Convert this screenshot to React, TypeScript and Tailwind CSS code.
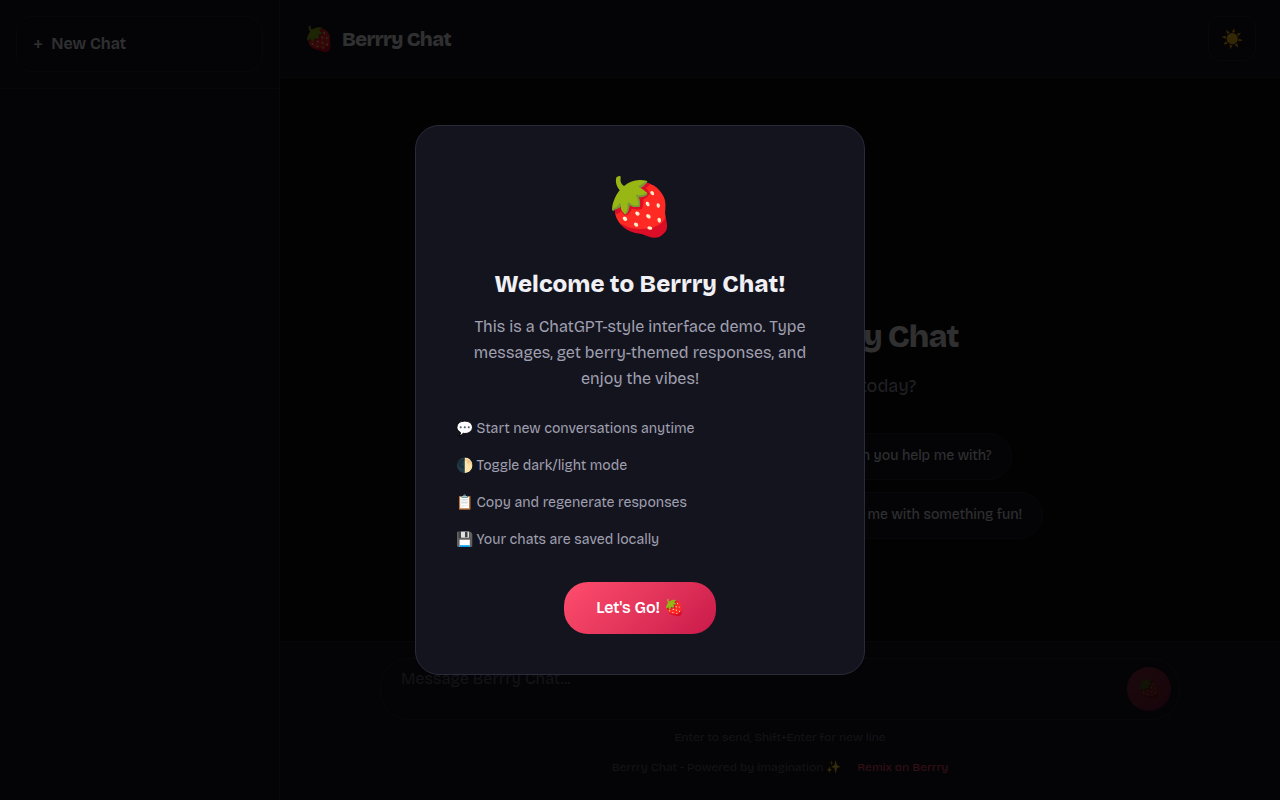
const SUGGESTIONS = [
  "🍓 Tell me a fun fruit joke",
  "✨ What can you help me with?",
  "🎨 Write me a short fun poem",
  "🎲 Surprise me with something fun!",
];

const FEATURES = [
  "💬 Start new conversations anytime",
  "🌓 Toggle dark/light mode",
  "📋 Copy and regenerate responses",
  "💾 Your chats are saved locally",
];

function Sidebar() {
  return (
    <aside className="w-[280px] shrink-0 border-r border-[#2a2a3a] bg-[#14141f]">
      <div className="border-b border-[#2a2a3a] p-4">
        <button
          type="button"
          className="flex h-14 w-full items-center gap-2 rounded-2xl border border-[#2a2a3a] bg-[#14141f] px-4 text-base font-semibold"
        >
          <span className="text-xl font-normal">+</span>
          <span>New Chat</span>
        </button>
      </div>
    </aside>
  );
}

function Header() {
  return (
    <header className="flex items-center justify-between border-b border-[#2a2a3a] bg-[#14141f] px-6 py-4">
      <div className="flex items-center gap-2">
        <span className="text-2xl">🍓</span>
        <span className="text-xl font-extrabold tracking-[-0.03em]">Berrry Chat</span>
      </div>
      <button
        type="button"
        aria-label="Toggle theme"
        className="flex h-[45px] w-12 items-center justify-center rounded-xl border border-[#2a2a3a] bg-[#14141f] text-lg"
      >
        ☀️
      </button>
    </header>
  );
}

function Composer() {
  return (
    <footer className="border-t border-[#2a2a3a] bg-[#14141f] px-6 pt-4 pb-6 text-center text-xs text-[#606070]">
      <div className="mx-auto flex max-w-[800px] gap-2 rounded-[28px] border border-[#2a2a3a] p-2 pl-5">
        <textarea
          rows={1}
          aria-label="Message"
          placeholder="Message Berrry Chat..."
          className="h-11 flex-1 resize-none bg-transparent text-base outline-none placeholder:text-[#606070]"
        />
        <button
          type="button"
          aria-label="Send"
          className="size-11 rounded-full bg-linear-135 from-[#ff4d6d] to-[#c9184a] text-[19px] opacity-50"
        >
          🍓
        </button>
      </div>
      <p className="mt-2 leading-[18px]">Enter to send, Shift+Enter for new line</p>
      <p className="mt-3 flex justify-center gap-4 leading-[18px]">
        <span>Berrry Chat - Powered by imagination ✨</span>
        <a href="#remix" className="text-[#ff4d6d]">
          Remix on Berrry
        </a>
      </p>
    </footer>
  );
}

function WelcomeModal() {
  return (
    <div className="fixed inset-0 flex items-center justify-center bg-black/80 p-4">
      <div
        role="dialog"
        aria-modal="true"
        aria-labelledby="welcome-title"
        className="w-full max-w-[450px] rounded-3xl border border-[#2a2a3a] bg-[#14141f] p-10 text-center"
      >
        <div className="text-[56px] leading-[84px]">🍓</div>
        <h2 id="welcome-title" className="mt-3.5 text-2xl leading-10 font-extrabold">
          Welcome to Berrry Chat!
        </h2>
        <p className="mt-2.5 text-base leading-[26px] text-[#a0a0b0]">
          This is a ChatGPT-style interface demo. Type messages, get berry-themed responses, and enjoy the vibes!
        </p>
        <ul className="mt-4.5 mb-6 text-left text-sm text-[#a0a0b0]">
          {FEATURES.map((feature) => (
            <li key={feature} className="leading-[37px]">
              {feature}
            </li>
          ))}
        </ul>
        <button
          type="button"
          className="h-[52px] rounded-3xl bg-linear-135 from-[#ff4d6d] to-[#c9184a] px-8 text-base font-semibold text-white"
        >
          Let's Go! 🍓
        </button>
      </div>
    </div>
  );
}

export default function App() {
  return (
    <div className="flex min-h-screen bg-[#0a0a0f] font-['Bricolage_Grotesque','Inter',sans-serif] text-[#f0f0f5]">
      <Sidebar />
      <div className="flex min-w-0 flex-1 flex-col">
        <Header />
        <main className="flex flex-1 flex-col items-center justify-center text-center">
          <div className="mb-4 text-[64px] leading-[114px]">🍓</div>
          <h1 className="text-[32px] leading-[52px] font-extrabold tracking-[-0.03em]">Welcome to Berrry Chat</h1>
          <p className="mt-2 text-lg leading-[30px] text-[#a0a0b0]">Hello! How can I help you today?</p>
          <div className="mt-8 flex max-w-[600px] flex-wrap justify-center gap-3">
            {SUGGESTIONS.map((text) => (
              <button
                key={text}
                type="button"
                className="h-[47px] rounded-full border border-[#2a2a3a] bg-[#14141f] px-5 text-sm"
              >
                {text}
              </button>
            ))}
          </div>
        </main>
        <Composer />
      </div>
      <WelcomeModal />
    </div>
  );
}
